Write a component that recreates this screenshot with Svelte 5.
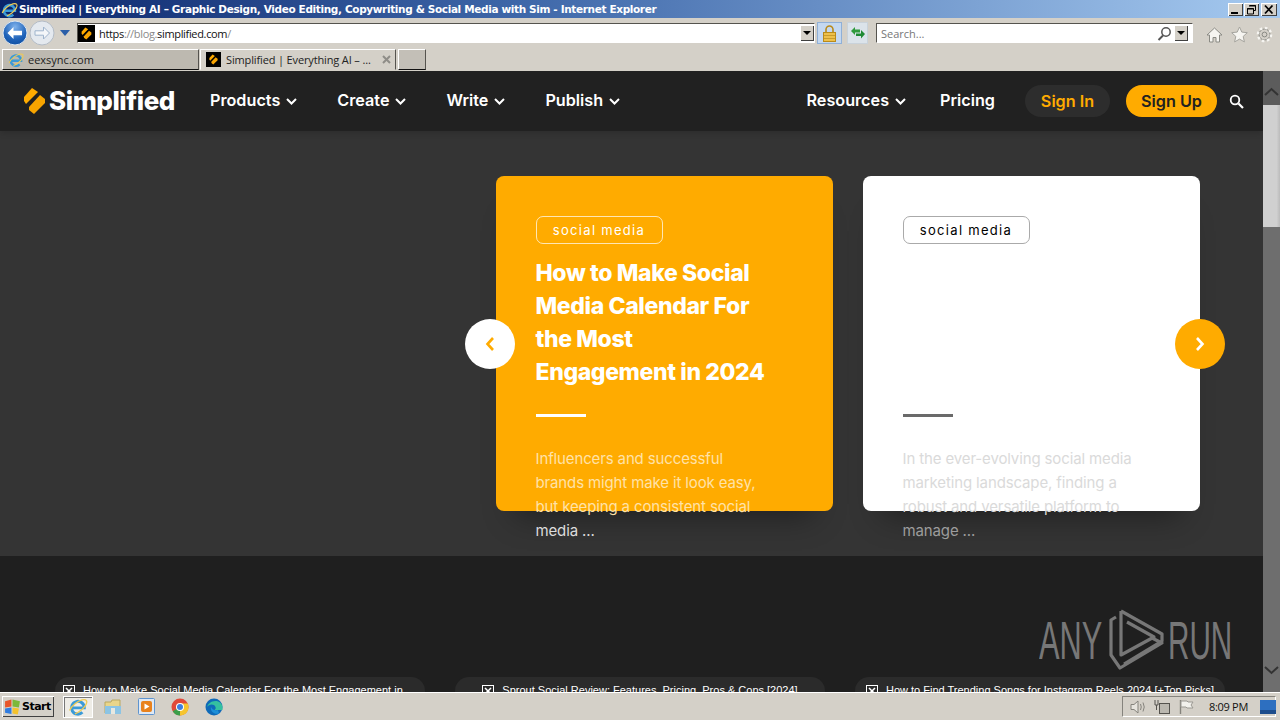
<script>
  const tabs = [
    'How to Make Social Media Calendar For the Most Engagement in 2024',
    'Sprout Social Review: Features, Pricing, Pros & Cons [2024]',
    'How to Find Trending Songs for Instagram Reels 2024 [+Top Picks]'
  ];
  const left = ['Products', 'Create', 'Write', 'Publish'];
</script>

{#snippet chev()}
  <svg class="chev" width="11" height="7" viewBox="0 0 11 7"><path d="M1 1l4.500 4.500L10 1" fill="none" stroke="currentColor" stroke-width="2"/></svg>
{/snippet}

{#snippet mark(w, h)}
  <svg width={w} height={h} viewBox="4 3 23 28"><path d="M5 13l8-9 6 4L7 20l-2-3z" fill="#ffab00"/><path d="M10 23l11-12 5 4v4L15 30l-5-4z" fill="#f7a400"/></svg>
{/snippet}

{#snippet fav(size)}
  <span class="fav" style="width:{size}px;height:{size}px">{@render mark(size - 6, size - 4)}</span>
{/snippet}

{#snippet ie(size)}
  <svg width={size} height={size} viewBox="0 0 20 20">
    <path d="M4.200 10.800H15.700A5.800 5.800 0 1 0 14 14.800" fill="none" stroke="#3a9ad8" stroke-width="2.700"/>
    <ellipse cx="10" cy="10" rx="9.600" ry="4" transform="rotate(-38 10 10)" fill="none" stroke="#eecb55" stroke-width="1.200" stroke-dasharray="17 8 20"/>
  </svg>
{/snippet}

{#snippet drop()}
  <span class="dropbtn"><i></i></span>
{/snippet}

<div class="screen">
  <header class="title">
    <span class="title-ico">{@render ie(20)}</span>
    <span class="title-text">Simplified | Everything AI – Graphic Design, Video Editing, Copywriting &amp; Social Media with Sim - Internet Explorer</span>
    <div class="winbtns">
      <span class="wb"><svg width="15" height="13"><rect x="3" y="9" width="7" height="2" fill="#000"/></svg></span>
      <span class="wb"><svg width="15" height="13"><path d="M5.500 2.500h6v5h-2M3.500 5.500h6v5.500h-6z" fill="none" stroke="#000"/><path d="M5 3h7M3 6h7" stroke="#000"/></svg></span>
      <span class="wb last"><svg width="16" height="13"><path d="M4 2.500l7.500 8M11.500 2.500l-7.500 8" stroke="#000" stroke-width="1.800"/></svg></span>
    </div>
  </header>

  <div class="toolbar">
    <svg class="nav-btn" width="26" height="26" viewBox="0 0 26 26">
      <defs>
        <radialGradient id="b" cx=".5" cy=".25" r=".85"><stop offset="0" stop-color="#7fb2ec"/><stop offset=".6" stop-color="#1f62b8"/><stop offset="1" stop-color="#0a4a9c"/></radialGradient>
      </defs>
      <circle cx="13" cy="13" r="12" fill="url(#b)" stroke="#dfe6ee"/>
      <path d="M5.500 13l6-6v3.800h8.500v4.400h-8.500v3.800z" fill="#fff"/>
    </svg>
    <svg class="nav-btn fwd" width="26" height="26" viewBox="0 0 26 26">
      <circle cx="13" cy="13" r="12" fill="#e4e9ef" stroke="#b4bcc6"/>
      <path d="M20.500 13l-6-6v3.800H6v4.400h8.500v3.800z" fill="#f4f6f9" stroke="#9fb4cc"/>
    </svg>
    <svg class="hist" width="10" height="6"><path d="M0 0h10L5 6z" fill="#2a5ea8"/></svg>
    <div class="addr">
      {@render fav(17)}
      <span class="url"><b>https</b>://blog.<b>simplified.com</b>/</span>
      {@render drop()}
    </div>
    <span class="lock">
      <svg width="15" height="17" viewBox="0 0 15 17"><path d="M4 8V4.500a3.500 3.500 0 017 0V8" fill="none" stroke="#b98a1a" stroke-width="1.600"/><rect x="1.500" y="7.500" width="12" height="9" fill="#eec04a" stroke="#b98a1a"/><path d="M2 10.500h11M2 13.500h11" stroke="#c99c2c"/></svg>
    </span>
    <span class="refresh">
      <svg width="16" height="14" viewBox="0 0 16 14"><path d="M1 5l4-4v2.500h5V6.500H5V9z" fill="#2f9a3c"/><path d="M15 8l-4 4.500V10H6V7.500h5V4z" fill="#1f8a34"/></svg>
    </span>
    <div class="search">
      <span class="placeholder">Search...</span>
      <svg class="mag" width="15" height="15" viewBox="0 0 15 15"><circle cx="9" cy="6" r="4.200" fill="none" stroke="#555" stroke-width="1.500"/><path d="M6 9.500L1.500 14" stroke="#555" stroke-width="2"/></svg>
      {@render drop()}
    </div>
    <div class="tools">
      <svg width="17" height="17" viewBox="0 0 17 17"><path d="M1 9l7.500-7L16 9h-2.500v7H10v-4.500H7V16H3.500V9z" fill="#f6f5f1" stroke="#8a8a84"/></svg>
      <svg width="17" height="17" viewBox="0 0 17 17"><path d="M8.500 1l2.300 5.100 5.500.6-4.100 3.700 1.200 5.500-4.900-2.800-4.900 2.800 1.200-5.500L.7 6.700l5.500-.6z" fill="#f6f5f1" stroke="#a5a49e"/></svg>
      <svg width="17" height="17" viewBox="0 0 17 17"><circle cx="8.500" cy="8.500" r="5.500" fill="none" stroke="#8a8a84" stroke-width="1"/><circle cx="8.500" cy="8.500" r="6.600" fill="none" stroke="#f6f5f1" stroke-width="2.400" stroke-dasharray="2.600 2.600"/><circle cx="8.500" cy="8.500" r="2.400" fill="#d4d0c8" stroke="#8a8a84"/></svg>
    </div>
  </div>

  <div class="tabbar">
    <div class="tab off"><span class="tab-ico">{@render ie(18)}</span><span>eexsync.com</span></div>
    <div class="tab on">
      {@render fav(15)}
      <span class="tab-label">Simplified | Everything AI – ...</span>
      <svg class="close" width="9" height="9"><path d="M1 1l7 7M8 1l-7 7" stroke="#8f8d88" stroke-width="2"/></svg>
    </div>
    <div class="tab new"></div>
  </div>

  <div class="viewport">
    <div class="page">
      <nav class="topnav">
        <a class="logo"><span class="logo-mark">{@render mark(23, 28)}</span><span>Simplified</span></a>
        {#each left as item}
          <a class="nav-item">{item}{@render chev()}</a>
        {/each}
        <div class="nav-right">
          <a class="nav-item res">Resources{@render chev()}</a>
          <a class="nav-item pricing">Pricing</a>
          <a class="pill in">Sign In</a>
          <a class="pill up">Sign Up</a>
          <svg class="find" width="15" height="15" viewBox="0 0 15 15"><circle cx="6" cy="6" r="4.300" fill="none" stroke="#fff" stroke-width="1.800"/><path d="M9.500 9.500L14 14" stroke="#fff" stroke-width="2.200"/></svg>
        </div>
      </nav>

      <section class="hero">
        <div class="cards">
          <article class="card amber">
            <span class="tag">social media</span>
            <h2>How to Make Social<br/>Media Calendar For<br/>the Most<br/>Engagement in 2024</h2>
            <div class="rule"></div>
            <p>Influencers and successful<br/>brands might make it look easy,<br/>but keeping a consistent social<br/><span class="tail">media ...</span></p>
          </article>
          <article class="card white">
            <span class="tag">social media</span>
            <div class="notitle"></div>
            <div class="rule"></div>
            <p>In the ever-evolving social media<br/>marketing landscape, finding a<br/>robust and versatile platform to<br/><span class="tail">manage ...</span></p>
          </article>
        </div>
        <button class="arrow prev" aria-label="Previous"><svg width="12" height="16" viewBox="0 0 12 16"><path d="M9 2L3.500 8 9 14" fill="none" stroke="#ffab00" stroke-width="2.600"/></svg></button>
        <button class="arrow next" aria-label="Next"><svg width="12" height="16" viewBox="0 0 12 16"><path d="M3 2l5.500 6L3 14" fill="none" stroke="#fff" stroke-width="2.600"/></svg></button>
      </section>

      <section class="lower">
        {#each tabs as t}
          <div class="post">
            <svg class="broken" width="12" height="12"><rect x=".5" y=".5" width="11" height="11" fill="none" stroke="#fff"/><path d="M3 3l6 6M9 3l-6 6" stroke="#fff" stroke-width="1.500"/></svg>
            <span>{t}</span>
          </div>
        {/each}
      </section>
    </div>

    <aside class="scroll">
      <div class="cap">
        <svg width="17" height="10" viewBox="0 0 17 10"><path d="M2 8l6.500-6L15 8" fill="none" stroke="#333" stroke-width="2"/></svg>
      </div>
      <div class="thumb"></div>
      <svg class="down-a" width="17" height="10" viewBox="0 0 17 10"><path d="M2 2l6.500 6L15 2" fill="none" stroke="#333" stroke-width="2"/></svg>
    </aside>

    <div class="watermark">
      <span class="wm-word any">ANY</span>
      <svg width="58" height="70" viewBox="9 0 58 70">
        <g fill="none" stroke="#777" stroke-width="3.200" stroke-linejoin="round">
          <path d="M16 12l-5 3v35l9 13 42-25-10-5"/>
          <path d="M21 6v44l33-18-27-15"/>
          <path d="M21 6l41 23v7L24 59"/>
        </g>
      </svg>
      <span class="wm-word run">RUN</span>
    </div>
  </div>

  <footer class="taskbar">
    <button class="start">
      <svg width="17" height="16" viewBox="0 0 16 15"><path d="M1 2l6-1.500V7L1 8z" fill="#e8562a"/><path d="M8 .5l7 1.500-1 6-6-1z" fill="#7cb83a"/><path d="M1 9l6-1v6l-6-1z" fill="#2f7ce0"/><path d="M8 8l6 1-1 5.500-5-1z" fill="#f4c22c"/></svg>
      <span>Start</span>
    </button>
    <span class="active-app">{@render ie(22)}</span>
    <div class="apps">
      <svg width="18" height="17" viewBox="0 0 18 17"><path d="M1 4h6l1-2h8v13H1z" fill="#e9d58a" stroke="#b9a860"/><rect x="1" y="8" width="16" height="8" fill="#8cc4e4"/><rect x="7" y="10" width="4" height="6" fill="#e8e8e0"/></svg>
      <svg width="17" height="17" viewBox="0 0 17 17"><rect x=".5" y=".5" width="16" height="16" rx="1" fill="#dfe9f5" stroke="#5e94cf"/><rect x="3" y="3" width="11" height="11" rx="2" fill="#e8821e"/><path d="M6.500 5.500l5 3-5 3z" fill="#fff"/></svg>
      <svg width="18" height="18" viewBox="0 0 18 18"><circle cx="9" cy="9" r="8.500" fill="#e04a3a"/><path d="M9 9L1.700 13.300A8.500 8.500 0 009 17.500z" fill="#3c9e4a"/><path d="M9 9l0 8.500A8.500 8.500 0 0016.800 5.500H9z" fill="#f6c52e"/><circle cx="9" cy="9" r="4" fill="#fff"/><circle cx="9" cy="9" r="3" fill="#3d7fe0"/></svg>
      <svg width="18" height="18" viewBox="0 0 18 18"><circle cx="9" cy="9" r="8.500" fill="#0f6ab8"/><path d="M17.500 9.500c0-4-3.500-6.500-7-6.500C6 3 3 6 2 9c2-3 7-3.500 8.500 0 .5 1.500 0 2-1 3h8z" fill="#35c0a0"/><path d="M6 9c-1 4 3 8 8 6.500l-1-3.500c-3 1-6-.5-7-3z" fill="#1c8fd8"/></svg>
    </div>
    <div class="tray">
      <svg width="16" height="14" viewBox="0 0 16 14"><path d="M1 4.500h3L8 1v12L4 9.500H1z" fill="#e6e4de" stroke="#85837d"/><path d="M10.500 4q1.500 3 0 6M13 2.500q2.500 4.500 0 9" fill="none" stroke="#85837d"/></svg>
      <svg width="16" height="16" viewBox="0 0 16 16"><rect x="5.500" y="4.500" width="10" height="10" fill="#bbb8b0" stroke="#55534e"/><path d="M1 1v5h3V1M2.500 6v5" fill="none" stroke="#55534e"/></svg>
      <svg width="16" height="16" viewBox="0 0 16 16"><path d="M2.500 1v14" stroke="#85837d" stroke-width="1.400"/><path d="M3 2h6l1 1h5l-2 3 2 3H9L8 8H3z" fill="#f2f1ec" stroke="#9a9892"/></svg>
      <span class="clock">8:09 PM</span>
    </div>
    <svg class="show" width="16" height="14" viewBox="0 0 16 14"><rect width="16" height="14" fill="#2d6fc0"/><rect y="10" width="16" height="4" fill="#1d4d8c"/></svg>
  </footer>
</div>

<style>
  :global(body) { margin: 0; background: #d4d0c8; }
  .screen { width: 1280px; height: 720px; display: flex; flex-direction: column; overflow: hidden; background: #d4d0c8; position: relative; }
  a { color: inherit; text-decoration: none; }

  .title { height: 18px; flex: none; display: flex; align-items: center; background: linear-gradient(90deg, #0a246a 0%, #3d66a8 40%, #a6caf0 100%); color: #fff; position: relative; }
  .title-ico { width: 19px; display: flex; margin-top: 1px; }
  .title-text { font: 700 10.500px/18px "DejaVu Sans", sans-serif; letter-spacing: -.36px; white-space: nowrap; }
  .winbtns { margin-left: auto; margin-right: 3px; display: flex; gap: 1px; }
  .wb { width: 15px; height: 13px; background: #d4d0c8; box-shadow: inset 1px 1px #fff, inset -1px -1px #404040; display: block; }
  .wb svg { display: block; }
  .wb.last { width: 16px; margin-left: 1px; }

  .toolbar { height: 28px; flex: none; display: flex; align-items: center; position: relative; padding-top: 2px; box-sizing: border-box; }
  .nav-btn { margin-left: 2px; flex: none; }
  .nav-btn.fwd { margin-left: 1px; }
  .hist { margin-left: 5px; flex: none; }
  .addr { width: 738px; height: 20px; margin-left: 7px; box-sizing: border-box; border: 1px solid #55534e; border-right-color: #fff; border-bottom-color: #fff; background: #fff; display: flex; align-items: center; }
  .fav { display: inline-flex; align-items: center; justify-content: center; background: #000; flex: none; }
  .url { margin-left: 4px; font: 11px "Open Sans", sans-serif; color: #8a8a8a; flex: 1; letter-spacing: -.34px; }
  .url b { font-weight: 400; color: #111; }
  .dropbtn { width: 14px; height: 16px; background: #d4d0c8; box-shadow: inset 1px 1px #fff, inset -1px -1px #404040; display: flex; align-items: center; justify-content: center; flex: none; margin-right: 4px; }
  .dropbtn i { border: 4px solid transparent; border-top: 4px solid #000; border-bottom: 0; display: block; }
  .addr .dropbtn { margin-right: 0; }
  .lock { width: 25px; height: 22px; margin-left: 2px; box-sizing: border-box; background: #c4d8f0; border: 1px solid #8fb0d8; display: flex; align-items: center; justify-content: center; flex: none; }
  .refresh { width: 21px; height: 22px; margin-left: 5px; background: #dbe3ea; border: 1px solid #c9d2da; box-sizing: border-box; display: flex; align-items: center; justify-content: center; flex: none; }
  .search { width: 317px; height: 20px; margin-left: 8px; box-sizing: border-box; border: 1px solid #55534e; border-right-color: #fff; border-bottom-color: #fff; background: #fff; display: flex; align-items: center; flex: none; }
  .placeholder { margin-left: 4px; flex: 1; font: 11px "Open Sans", sans-serif; color: #777; }
  .mag { margin-right: 2px; }
  .tools { display: flex; gap: 8px; margin-left: 13px; align-items: center; padding-top: 3px; }

  .tabbar { height: 25px; flex: none; display: flex; align-items: flex-end; padding-left: 2px; padding-bottom: 1px; box-sizing: border-box; gap: 1px; }
  .tab { height: 21px; box-sizing: border-box; display: flex; align-items: center; font: 11px "Open Sans", sans-serif; color: #222; border-top: 1px solid #fff; border-left: 1px solid #fff; border-right: 1px solid #55534e; border-bottom: 1px solid #111; }
  .tab.off { width: 197px; background: #bdb9b0; padding-left: 4px; }
  .tab-ico { display: flex; margin-right: 3px; }
  .tab.on { width: 196px; background: #d4d0c8; padding-left: 5px; border-bottom: 1px solid #d4d0c8; }
  .tab-label { margin-left: 5px; white-space: nowrap; width: 154px; letter-spacing: -.14px; }
  .close { margin-left: 2px; }
  .tab.new { width: 28px; margin-left: 1px; background: #c3bfb7; }

  .viewport { flex: 1; min-height: 0; display: flex; position: relative; }
  .page { width: 1263px; flex: none; display: flex; flex-direction: column; overflow: hidden; }

  .topnav { height: 60px; flex: none; background: #212121; display: flex; align-items: center; padding: 0 19px 0 23px; color: #fff; font: 600 16.200px "Inter", sans-serif; box-sizing: border-box; box-shadow: 0 2px 6px rgba(0,0,0,.15); position: relative; z-index: 1; }
  .logo { display: flex; align-items: center; font: 800 26px "Inter", sans-serif; letter-spacing: -.45px; margin-right: 35px; width: 152px; flex: none; padding-bottom: 1px; box-sizing: border-box; }
  .logo-mark { display: flex; margin-right: 3px; }
  .nav-item { display: flex; align-items: center; gap: 6px; margin-right: 40px; white-space: nowrap; padding-bottom: 2px; }
  .chev { margin-top: 2px; }
  .nav-right { margin-left: auto; display: flex; align-items: center; }
  .nav-item.res { margin-right: 34px; }
  .nav-item.pricing { margin-right: 30px; }
  .pill { height: 32px; border-radius: 16px; display: flex; align-items: center; justify-content: center; box-sizing: border-box; padding-bottom: 1px; }
  .pill.in { width: 85px; background: #2d2d2d; color: #ffab00; margin-right: 16px; }
  .pill.up { width: 91px; background: #ffab00; color: #212121; margin-right: 12px; }

  .hero { height: 425px; flex: none; background: #343434; position: relative; box-sizing: border-box; padding: 45px 0 0 496px; }
  .cards { display: flex; gap: 30px; }
  .card { width: 337px; height: 335px; border-radius: 8px; box-sizing: border-box; padding: 40px 40px 0 39.500px; box-shadow: 0 24px 30px -20px rgba(0,0,0,.42); flex: none; }
  .amber { background: #ffab00; color: #fff; }
  .white { background: #fff; color: #000; }
  .tag { display: block; width: 127px; height: 28px; box-sizing: border-box; border: 1px solid rgba(255,255,255,.7); border-radius: 7px; font: 13px/26px "Inter", sans-serif; letter-spacing: 1.300px; text-align: center; }
  .white .tag { border-color: #aaa; }
  h2 { margin: 13px 0 0; font: 800 23px/33px "Inter", sans-serif; letter-spacing: -.38px; white-space: nowrap; }
  .notitle { height: 132px; margin-top: 13px; }
  .rule { width: 50px; height: 3px; background: #fff; margin: 25px 0 0; }
  .white .rule { background: #6a6a6a; }
  p { margin: 30px 0 0; font: 400 15px/24px "Inter", sans-serif; letter-spacing: -.13px; white-space: nowrap; color: #ffe2a8; }
  .tail { color: #dcdcdc; }
  .white p { color: #dadada; }
  .white .tail { color: #9d9d9d; }

  .arrow { position: absolute; top: 188px; width: 50px; height: 50px; border-radius: 50%; border: 0; padding: 0; display: flex; align-items: center; justify-content: center; }
  .prev { left: 465px; background: #fff; }
  .next { left: 1175px; background: #ffab00; }

  .lower { flex: 1; min-height: 0; background: #1f1f1f; box-sizing: border-box; padding: 121px 0 0 55px; display: flex; gap: 30px; overflow: hidden; align-items: flex-start; }
  .post { width: 370px; height: 60px; flex: none; box-sizing: border-box; padding: 6px 8px; border-radius: 14px; background: #2b2b2b; display: flex; justify-content: center; align-items: flex-start; gap: 8px; color: #fff; font: 11px/14px "Liberation Sans", sans-serif; }
  .broken { flex: none; margin-top: 2px; }

  .scroll { width: 17px; flex: none; background: #6e6e6e; position: relative; display: flex; flex-direction: column; align-items: center; }
  .cap { width: 17px; height: 34px; background: #5c5c5c; box-sizing: border-box; padding-top: 16px; flex: none; }
  .cap svg { display: block; }
  .thumb { width: 17px; height: 122px; background: linear-gradient(90deg, #d0d0d0, #d0d0d0 80%, #bbb); }
  .down-a { margin-top: auto; margin-bottom: 17px; }

  .watermark { position: absolute; left: 1039px; top: 534px; height: 70px; display: flex; align-items: center; color: #777; }
  .wm-word { font: 400 53px/62px "Liberation Sans", sans-serif; display: inline-block; transform-origin: left center; transform: scaleX(.58); width: 65px; margin-top: 2px; }
  .watermark svg { margin-left: 5px; flex: none; }
  .run { transform: scaleX(.56); margin-left: 1px; }

  .taskbar { height: 28px; flex: none; background: #d4d0c8; border-top: 1px solid #fff; box-sizing: border-box; display: flex; align-items: center; padding-left: 2px; position: relative; }
  .start { width: 52px; height: 21px; padding: 0 0 0 2px; border: 0; background: #d4d0c8; box-shadow: inset 1px 1px #fff, inset -1px -1px #404040; display: flex; align-items: center; gap: 1px; font: 700 11px "DejaVu Sans", sans-serif; letter-spacing: -.5px; color: #000; }
  .active-app { width: 30px; height: 22px; margin-left: 9px; background: #eeece6; border: 1px solid #fff; box-shadow: inset 1px 1px #777; box-sizing: border-box; display: flex; align-items: center; justify-content: center; flex: none; }
  .apps { display: flex; align-items: center; gap: 16px; margin-left: 11px; }
  .tray { margin-left: auto; margin-right: 4px; width: 154px; height: 21px; box-sizing: border-box; border: 1px solid; border-color: #85837d #fff #fff #85837d; display: flex; align-items: center; padding-left: 7px; gap: 8px; position: relative; }
  .clock { font: 11px "Open Sans", sans-serif; letter-spacing: -.3px; color: #111; margin-left: 7px; white-space: nowrap; }
  .show { position: absolute; right: 4px; top: 7px; }
</style>
